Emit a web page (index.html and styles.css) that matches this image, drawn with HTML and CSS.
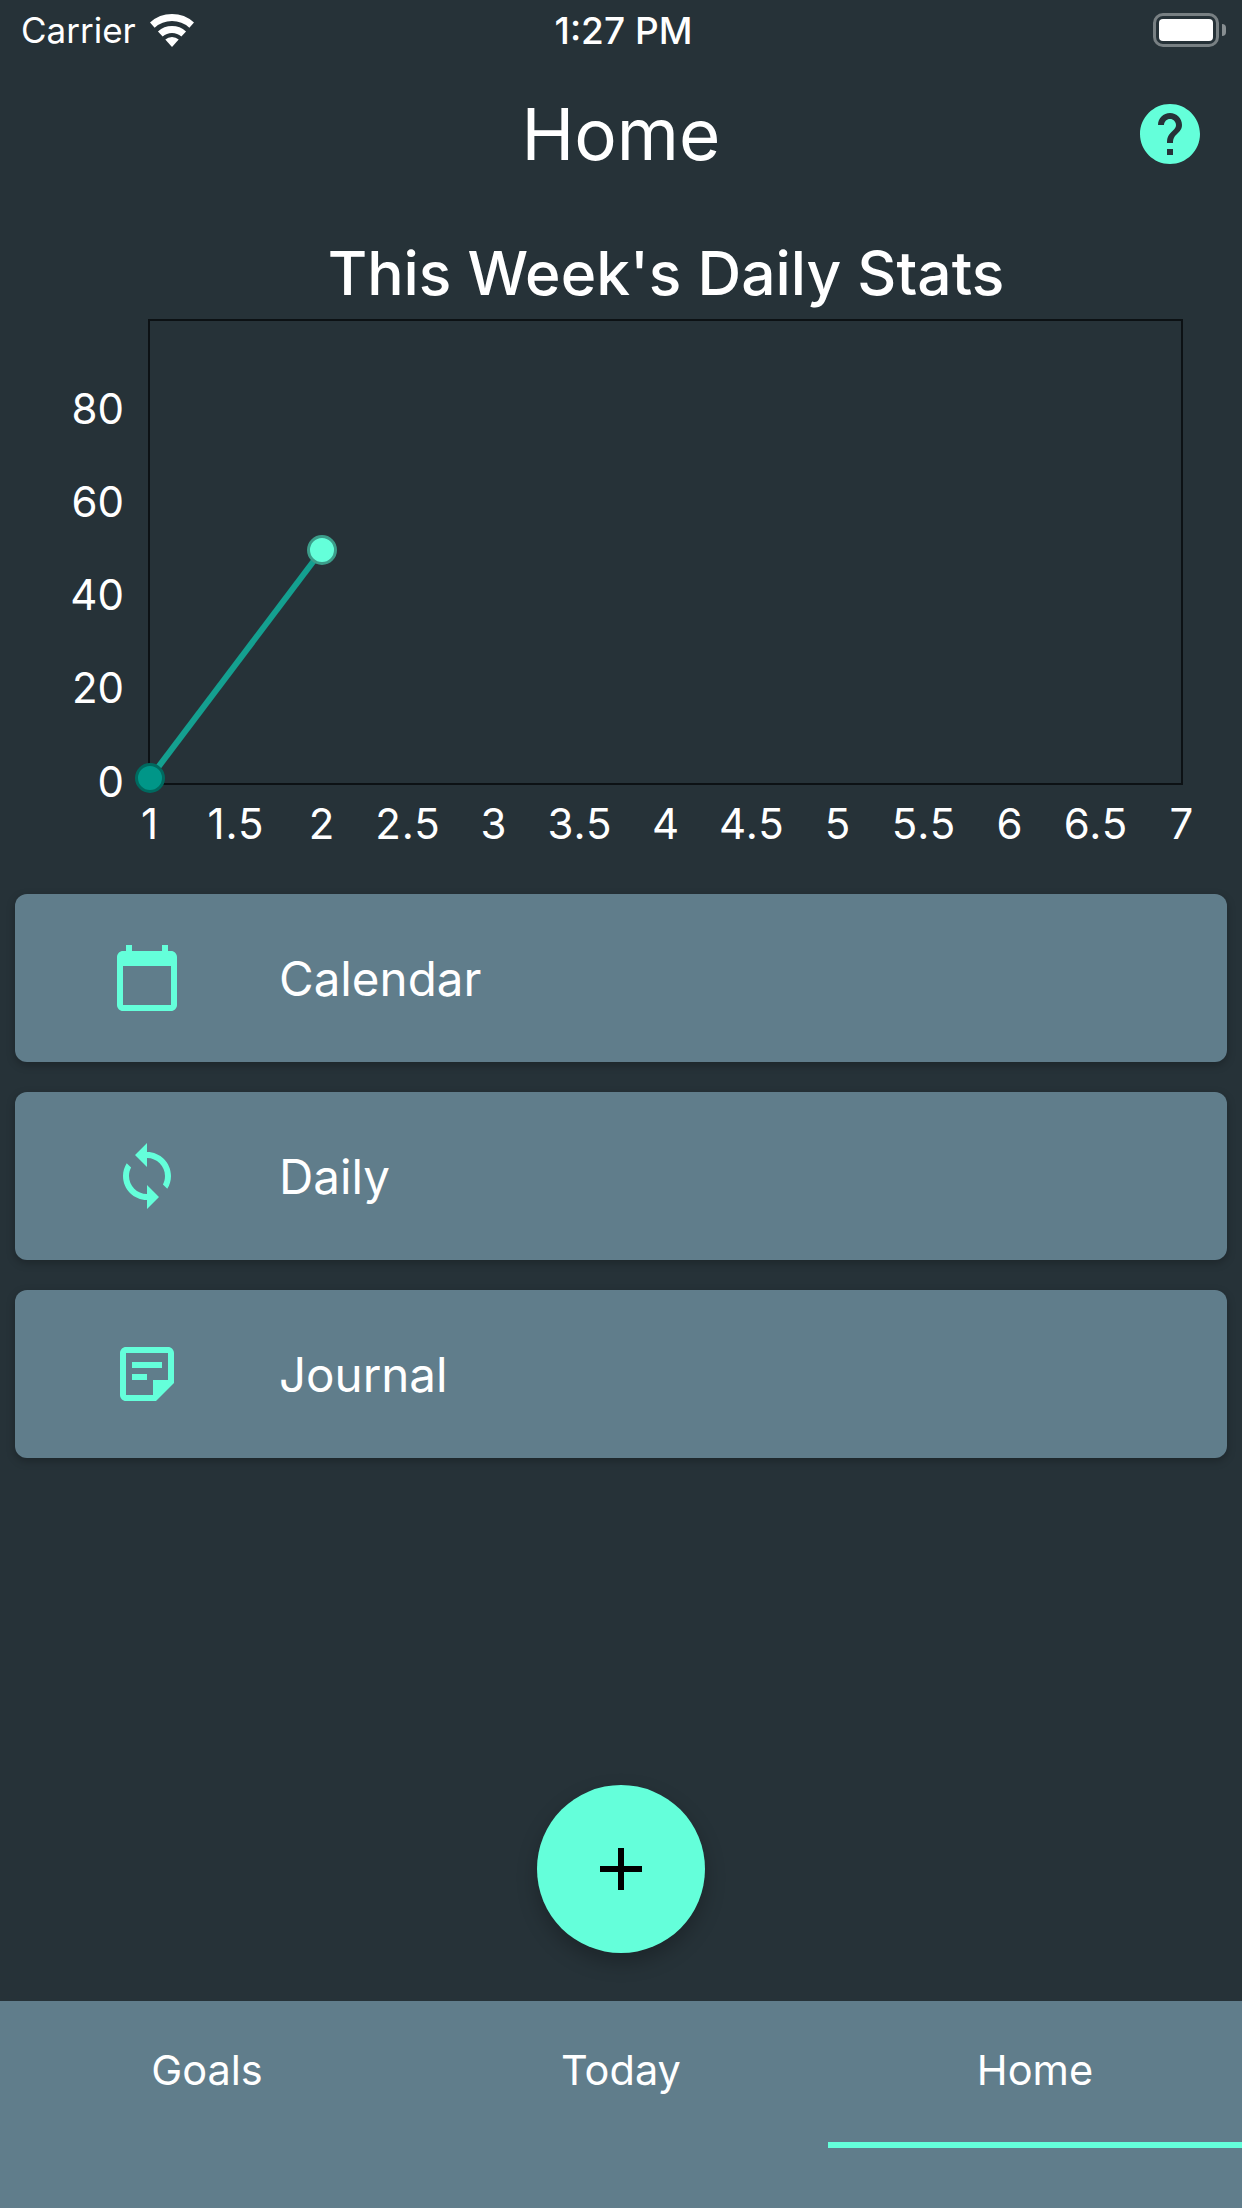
FILE: index.html
```html
<!DOCTYPE html>
<html lang="en">

<head>
    <meta charset="UTF-8">
    <meta name="viewport" content="width=device-width, initial-scale=1.0">
    <title>Home</title>
    <link rel="stylesheet" href="styles.css">
</head>

<body>
    <div class="status">
        <div class="status-left">
            <span>Carrier</span>
            <svg class="wifi" width="44" height="33" viewBox="0 0 44 33">
                <path d="M2.3 11.1A29.5 29.5 0 0 1 41.7 11.1" fill="none" stroke="#fff" stroke-width="7" />
                <path d="M10.3 20A17.5 17.5 0 0 1 33.7 20" fill="none" stroke="#fff" stroke-width="7" />
                <path d="M22 33L15.3 25.6A10 10 0 0 1 28.7 25.6Z" fill="#fff" />
            </svg>
        </div>
        <span class="status-time">1:27 PM</span>
        <div class="battery">
            <div class="battery-level"></div>
        </div>
    </div>

    <header class="header">
        <h1>Home</h1>
        <a href="#" class="help">
            <svg width="72" height="72" viewBox="0 0 24 24">
                <path fill="#64ffda" d="M12 2C6.48 2 2 6.48 2 12s4.48 10 10 10 10-4.48 10-10S17.52 2 12 2zm1 17h-2v-2h2v2zm2.07-7.75l-.9.92C13.45 12.9 13 13.5 13 15h-2v-.5c0-1.1.45-2.1 1.17-2.83l1.24-1.26c.37-.36.59-.86.59-1.41 0-1.1-.9-2-2-2s-2 .9-2 2H8c0-2.21 1.79-4 4-4s4 1.79 4 4c0 .88-.36 1.68-.93 2.25z" />
            </svg>
        </a>
    </header>

    <section class="stats">
        <h2>This Week's Daily Stats</h2>
        <svg class="chart" width="1242" height="546" viewBox="0 0 1242 546">
            <rect class="frame" x="149" y="2" width="1033" height="464" />
            <g class="y-labels">
                <text x="124" y="106">80</text>
                <text x="124" y="199">60</text>
                <text x="124" y="292">40</text>
                <text x="124" y="385">20</text>
                <text x="124" y="479">0</text>
            </g>
            <g class="x-labels">
                <text x="150" y="521">1</text>
                <text x="236" y="521">1.5</text>
                <text x="322" y="521">2</text>
                <text x="408" y="521">2.5</text>
                <text x="494" y="521">3</text>
                <text x="580" y="521">3.5</text>
                <text x="666" y="521">4</text>
                <text x="752" y="521">4.5</text>
                <text x="838" y="521">5</text>
                <text x="924" y="521">5.5</text>
                <text x="1010" y="521">6</text>
                <text x="1096" y="521">6.5</text>
                <text x="1182" y="521">7</text>
            </g>
            <line class="series" x1="150" y1="460" x2="322" y2="232" />
            <circle class="point-first" cx="150" cy="460" r="13.5" />
            <circle class="point-last" cx="322" cy="232" r="13.5" />
        </svg>
    </section>

    <main class="cards">
        <a href="#" class="card">
            <svg width="72" height="72" viewBox="0 0 24 24">
                <path fill="#64ffda" d="M20 3h-1V1h-2v2H7V1H5v2H4c-1.1 0-2 .9-2 2v16c0 1.1.9 2 2 2h16c1.1 0 2-.9 2-2V5c0-1.1-.9-2-2-2zm0 18H4V8h16v13z" />
            </svg>
            <span>Calendar</span>
        </a>
        <a href="#" class="card">
            <svg width="72" height="72" viewBox="0 0 24 24">
                <path fill="#64ffda" d="M12 4V1L8 5l4 4V6c3.31 0 6 2.69 6 6 0 1.01-.25 1.97-.7 2.8l1.46 1.46C19.54 15.03 20 13.57 20 12c0-4.42-3.58-8-8-8zm0 14c-3.31 0-6-2.69-6-6 0-1.01.25-1.97.7-2.8L5.24 7.74C4.46 8.97 4 10.43 4 12c0 4.42 3.58 8 8 8v3l4-4-4-4v3z" />
            </svg>
            <span>Daily</span>
        </a>
        <a href="#" class="card">
            <svg width="72" height="72" viewBox="0 0 24 24">
                <path fill="#64ffda" d="M19 5v9h-5v5H5V5h14m0-2H5c-1.1 0-2 .9-2 2v14c0 1.1.9 2 2 2h10l6-6V5c0-1.1-.9-2-2-2zm-7 11H7v-2h5v2zm5-4H7V8h10v2z" />
            </svg>
            <span>Journal</span>
        </a>
    </main>

    <a href="#" class="fab">
        <svg width="42" height="42" viewBox="0 0 42 42">
            <path d="M18 0h6v18h18v6H24v18h-6V24H0v-6h18z" />
        </svg>
    </a>

    <nav class="tabs">
        <a href="#" class="tab">Goals</a>
        <a href="#" class="tab">Today</a>
        <a href="#" class="tab current">Home</a>
    </nav>
</body>

</html>
```

FILE: styles.css
```css
* {
    margin: 0;
    padding: 0;
    box-sizing: border-box;
}

a {
    display: block;
    color: #fff;
    text-decoration: none;
}

body {
    display: flex;
    flex-direction: column;
    width: 1242px;
    height: 2208px;
    overflow: hidden;
    color: #fff;
    background-color: #263238;
    font-family: Inter, "Liberation Sans", sans-serif;
}

/* status bar */
.status {
    display: grid;
    grid-template-columns: 1fr auto 1fr;
    align-items: center;
    height: 60px;
    padding: 0 16px 0 21px;
    font-size: 35px;
}

.status-left {
    display: flex;
    align-items: center;
    gap: 14px;
}

.status-time {
    font-size: 37px;
    font-weight: 500;
}

.battery {
    position: relative;
    justify-self: end;
    width: 66px;
    height: 34px;
    margin-right: 7px;
    padding: 3px;
    border: 3px solid rgba(255, 255, 255, .38);
    border-radius: 10px;
}

.battery::after {
    content: "";
    position: absolute;
    left: 66px;
    top: 8px;
    width: 4px;
    height: 12px;
    border-radius: 0 6px 6px 0;
    background-color: rgba(255, 255, 255, .45);
}

.battery-level {
    height: 100%;
    border-radius: 4px;
    background-color: #fff;
}

/* title */
.header {
    position: relative;
    display: flex;
    justify-content: center;
    align-items: center;
    height: 148px;
}

.header h1 {
    font-size: 71px;
    font-weight: 400;
}

.help {
    position: absolute;
    left: 1134px;
    top: 38px;
    height: 72px;
}

/* chart */
.stats {
    padding-top: 20px;
}

.stats h2 {
    height: 90px;
    padding-left: 150px;
    padding-right: 60px;
    font-size: 60.5px;
    font-weight: 500;
    line-height: 90px;
    text-align: center;
}

.chart {
    display: block;
}

.frame {
    fill: none;
    stroke: #0c1114;
    stroke-width: 2;
}

.chart text {
    fill: #fff;
    font-size: 42px;
}

.y-labels text {
    text-anchor: end;
}

.x-labels text {
    text-anchor: middle;
    letter-spacing: 1px;
}

.series {
    stroke: #14a090;
    stroke-width: 6;
}

.point-first {
    fill: #009688;
    stroke: #00695f;
    stroke-width: 3;
}

.point-last {
    fill: #64ffda;
    stroke: #3c9d8a;
    stroke-width: 3;
}

/* cards */
.cards {
    display: flex;
    flex-direction: column;
    gap: 30px;
    padding: 30px 15px 0;
}

.card {
    display: flex;
    align-items: center;
    gap: 96px;
    height: 168px;
    padding-left: 96px;
    border-radius: 12px;
    font-size: 47.5px;
    background-color: #607d8b;
    box-shadow: 0 3px 8px rgba(0, 0, 0, .25);
}

/* add button */
.fab {
    display: flex;
    justify-content: center;
    align-items: center;
    align-self: center;
    width: 168px;
    height: 168px;
    margin-top: auto;
    margin-bottom: 48px;
    border-radius: 50%;
    background-color: #64ffda;
    box-shadow: 0 9px 20px rgba(0, 0, 0, .25);
}

/* tabs */
.tabs {
    display: flex;
    height: 207px;
    background-color: #607d8b;
}

.tab {
    flex: 1;
    height: 147px;
    padding-top: 39px;
    border-bottom: 6px solid transparent;
    font-size: 41.5px;
    line-height: 60px;
    text-align: center;
}

.tab.current {
    border-bottom-color: #64ffda;
}
```
